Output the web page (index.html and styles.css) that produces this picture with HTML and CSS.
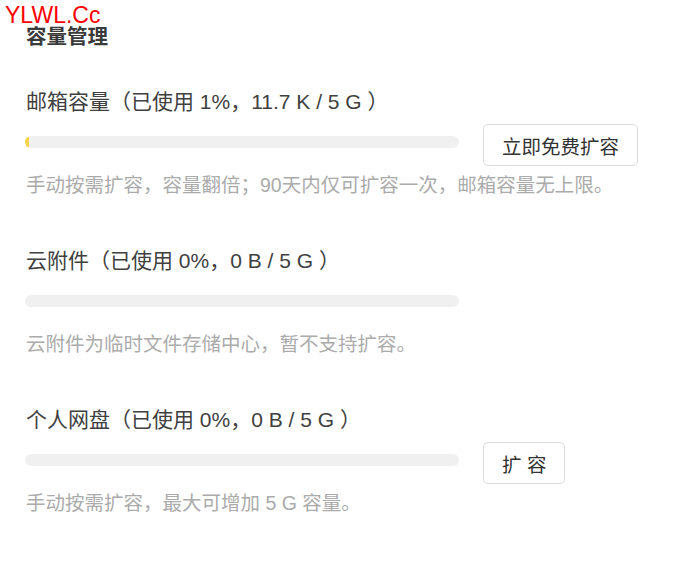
FILE: index.html
```html
<!DOCTYPE html>
<html lang="zh-CN">
<head>
<meta charset="utf-8">
<title>容量管理</title>
<link rel="stylesheet" href="styles.css">
</head>
<body>
<div class="watermark">YLWL.Cc</div>
<main class="page">
  <h2 class="title">容量管理</h2>
  <div class="sections">
    <section class="section">
      <div class="label">邮箱容量（已使用 1%，11.7 K / 5 G ）</div>
      <div class="row">
        <div class="bar"><div class="fill" style="width:1%"></div></div>
        <button class="btn">立即免费扩容</button>
      </div>
      <div class="desc">手动按需扩容，容量翻倍；90天内仅可扩容一次，邮箱容量无上限。</div>
    </section>
    <section class="section">
      <div class="label">云附件（已使用 0%，0 B / 5 G ）</div>
      <div class="row">
        <div class="bar"><div class="fill" style="width:0%"></div></div>
      </div>
      <div class="desc">云附件为临时文件存储中心，暂不支持扩容。</div>
    </section>
    <section class="section">
      <div class="label">个人网盘（已使用 0%，0 B / 5 G ）</div>
      <div class="row">
        <div class="bar"><div class="fill" style="width:0%"></div></div>
        <button class="btn">扩 容</button>
      </div>
      <div class="desc">手动按需扩容，最大可增加 5 G 容量。</div>
    </section>
  </div>
</main>
</body>
</html>
```

FILE: styles.css
```css
html, body {
  margin: 0;
  padding: 0;
  background: #ffffff;
}

body {
  font-family: "Liberation Sans", "Noto Sans CJK SC", sans-serif;
  color: #333333;
}

.watermark {
  position: absolute;
  top: 4px;
  left: 5px;
  font-family: "Liberation Sans", sans-serif;
  font-size: 23px;
  line-height: 1;
  color: #ff0000;
}

.page {
  padding: 23px 0 0 25px;
}

.title {
  margin: 0;
  font-size: 20.5px;
  line-height: 28px;
  font-weight: bold;
  color: #3a3a3a;
  padding-left: 1px;
}

.sections {
  margin-top: 37px;
  display: flex;
  flex-direction: column;
  gap: 48px;
}

.section {
  display: flex;
  flex-direction: column;
}

.label {
  font-size: 21px;
  line-height: 28px;
  color: #404040;
  padding-left: 1px;
}

.row {
  margin-top: 8px;
  height: 42px;
  display: flex;
  align-items: flex-start;
  gap: 24px;
}

.bar {
  margin-top: 12px;
  width: 434px;
  height: 12px;
  background: #f0f0f0;
  border-radius: 6px;
  overflow: hidden;
}

.fill {
  height: 100%;
  background: #f5d547;
  border-radius: 6px 0 0 6px;
}

.btn {
  height: 42px;
  padding: 0 18px;
  border: 1px solid #dcdcdc;
  border-radius: 5px;
  background: #ffffff;
  font-family: "Liberation Sans", "Noto Sans CJK SC", sans-serif;
  font-size: 19.5px;
  color: #333333;
  cursor: pointer;
}

.desc {
  margin-top: 6px;
  font-size: 19.5px;
  line-height: 27px;
  color: #ababab;
  padding-left: 1px;
}
```
